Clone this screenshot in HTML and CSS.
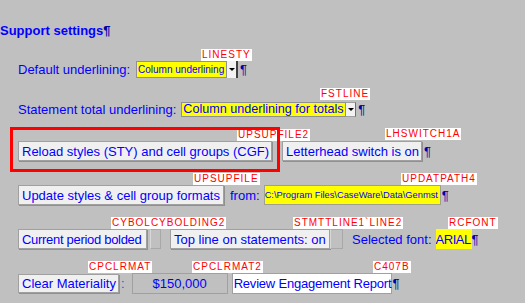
FILE: index.html
```html
<!DOCTYPE html>
<html>
<head>
<meta charset="utf-8">
<link rel="stylesheet" href="styles.css">
</head>
<body>
<div class="page">
  <h1 class="title">Support settings<span class="pil">¶</span></h1>

  <div class="row row-default">
    <span class="lbl">Default underlining:</span>
    <span class="combo combo-1">
      <span class="combo-val">Column underlining</span>
      <span class="combo-btn"><i class="arrow"></i></span>
    </span>
    <span class="pil">¶</span>
    <span class="badge b-linesty">LINESTY</span>
  </div>

  <div class="row row-total">
    <span class="lbl">Statement total underlining:</span>
    <span class="combo combo-2">
      <span class="combo-val">Column underlining for totals</span>
      <span class="combo-btn"><i class="arrow"></i></span>
    </span>
    <span class="pil">¶</span>
    <span class="badge b-fstline">FSTLINE</span>
  </div>

  <div class="row row-reload">
    <span class="badge b-upsupfile2">UPSUPFILE2</span>
    <span class="badge b-lhswitch">LHSWITCH1A</span>
    <div class="redbox">
      <span class="btn btn-reload">Reload styles (STY) and cell groups (CGF)</span>
    </div>
    <div class="group">
      <span class="btn btn-letter">Letterhead switch is on</span>
      <span class="pil">¶</span>
    </div>
  </div>

  <div class="row row-update">
    <span class="btn btn-update">Update styles &amp; cell group formats</span>
    <span class="lbl from">from:</span>
    <span class="field path">C:\Program Files\CaseWare\Data\Genmst</span>
    <span class="pil">¶</span>
    <span class="badge b-upsupfile">UPSUPFILE</span>
    <span class="badge b-updatpath">UPDATPATH4</span>
  </div>

  <div class="row row-bold">
    <span class="btn btn-current">Current period bolded</span>
    <span class="stub stub-1"></span>
    <span class="btn btn-topline">Top line on statements: on</span>
    <span class="stub stub-2"></span>
    <span class="lbl selfont">Selected font:</span>
    <span class="field arial">ARIAL</span>
    <span class="pil">¶</span>
    <span class="badge b-cybol">CYBOLCYBOLDING2</span>
    <span class="badge b-stmtt">STMTTLINE1`LINE2</span>
    <span class="badge b-rcfont">RCFONT</span>
  </div>

  <div class="row row-clear">
    <span class="btn btn-clear">Clear Materiality</span>
    <span class="lbl colon">:</span>
    <span class="amount">$150,000</span>
    <span class="review">Review Engagement Report</span>
    <span class="pil">¶</span>
    <span class="badge b-cpclrmat">CPCLRMAT</span>
    <span class="badge b-cpclrmat2">CPCLRMAT2</span>
    <span class="badge b-c407b">C407B</span>
  </div>
</div>
</body>
</html>
```
FILE: styles.css
```css
* { box-sizing: border-box; }
html, body { margin: 0; padding: 0; }
body {
  background: #c0c0c0;
  font-family: "Liberation Sans", Arial, sans-serif;
  font-size: 13px;
  color: #0000ff;
  width: 525px;
  height: 303px;
  overflow: hidden;
}
.page { padding-top: 23px; }
.title {
  margin: 0;
  font-size: 13px;
  font-weight: bold;
  line-height: 15px;
  height: 15px;
  color: #0000ff;
}
.pil { color: #0000a8; white-space: nowrap; }

.row {
  position: relative;
  display: flex;
  align-items: center;
  padding-left: 18px;
  line-height: 15px;
  white-space: nowrap;
}
.row-default { margin-top: 23px; height: 17px; }
.row-total { margin-top: 24px; height: 15px; }
.row-reload { margin-top: 10px; height: 45px; padding-left: 10px; align-items: flex-start; }
.row-update { margin-top: 13px; height: 20px; }
.row-bold { margin-top: 24px; height: 20px; }
.row-clear { margin-top: 24px; height: 21px; }

/* combo boxes */
.combo { display: flex; align-items: stretch; }
.combo-val {
  background: #ffff00;
  border: 1px solid #909090;
  overflow: hidden;
  color: #0000ff;
  padding-left: 1px;
  display: flex;
  align-items: center;
}
.combo-btn {
  background: #f2f2f2;
  border-right: 2px solid #404040;
  display: flex;
  align-items: center;
  justify-content: center;
}
.arrow {
  display: block;
  width: 0;
  height: 0;
  border-left: 3px solid transparent;
  border-right: 3px solid transparent;
  border-top: 3px solid #000;
}
.combo-1 { margin-left: 6px; height: 17px; }
.combo-1 .combo-val { width: 91px; font-size: 10px; }
.combo-1 .combo-btn { width: 11px; }
.combo-1 + .pil { margin-left: 2px; }
.combo-2 { margin-left: 5px; height: 15px; }
.combo-2 .combo-val { width: 165px; font-size: 12.6px; }
.combo-2 .combo-btn { width: 10px; border-right: 1px solid #707070; border-top: 1px solid #a0a0a0; border-bottom: 1px solid #a0a0a0; }
.combo-2 + .pil { margin-left: 2px; }

/* buttons */
.btn {
  display: flex;
  align-items: center;
  height: 20px;
  background: #f0f0f0;
  border: 1px solid #a0a0a0;
  box-shadow: 1px 1px 0 #909090;
  padding-left: 3px;
  color: #0000ff;
  overflow: hidden;
}
.redbox {
  position: relative;
  z-index: 2;
  width: 270px;
  height: 45px;
  border: 3px solid #ff0000;
  padding: 11px 0 0 5px;
}
.btn-reload { width: 254px; }
.group {
  display: flex;
  align-items: center;
  height: 20px;
  margin-top: 14px;
  margin-left: 2px;
}
.btn-letter { width: 140px; }
.btn-letter + .pil { margin-left: 2px; }

.btn-update { width: 206px; }
.from { margin-left: 6px; }
.field {
  display: flex;
  align-items: center;
  background: #ffff00;
  border: 1px solid #a0a090;
  height: 20px;
  overflow: hidden;
  color: #0000ff;
}
.path { margin-left: 4px; width: 177px; font-size: 9.3px; padding-left: 0; }
.path + .pil { margin-left: 1px; }

.btn-current { width: 129px; letter-spacing: -0.3px; }
.stub {
  display: block;
  height: 20px;
  background: #c0c0c0;
  border: 1px solid #a8a8a8;
  border-left-color: #d8d8d8;
}
.stub-1 { width: 11px; margin-left: 3px; }
.btn-topline { width: 160px; margin-left: 9px; }
.stub-2 { width: 13px; }
.selfont { margin-left: 9px; }
.arial { margin-left: 4px; width: 36px; border: none; letter-spacing: -0.45px; }

.btn-clear { width: 101px; height: 19px; }
.colon { margin-left: 2px; color: #4040ff; }
.amount {
  margin-left: 7px;
  width: 96px;
  height: 21px;
  border: 1px solid #a0a0a0;
  display: flex;
  align-items: center;
  justify-content: center;
  color: #0000ff;
}
.review {
  margin-left: 4px;
  height: 21px;
  background: #ffffff;
  border: 1px solid #a0a0a0;
  padding-left: 1px;
  letter-spacing: -0.2px;
  display: flex;
  align-items: center;
  color: #0000ff;
}

/* field-name badges */
.badge {
  position: absolute;
  z-index: 1;
  height: 12px;
  line-height: 12px;
  padding: 0 1px 0 1px;
  background: #ffffff;
  color: #ff0000;
  font-size: 10px;
  letter-spacing: 1px;
  font-weight: normal;
}
.b-linesty { left: 201px; top: -12px; }
.b-fstline { left: 320px; top: -14px; }
.b-upsupfile2 { left: 237px; top: 2px; }
.b-lhswitch { left: 385px; top: 1px; }
.b-upsupfile { left: 193px; top: -12px; }
.b-updatpath { left: 401px; top: -12px; }
.b-cybol { left: 111px; top: -12px; }
.b-stmtt { left: 293px; top: -12px; }
.b-rcfont { left: 448px; top: -12px; }
.b-cpclrmat { left: 88px; top: -12px; }
.b-cpclrmat2 { left: 192px; top: -12px; }
.b-c407b { left: 373px; top: -12px; }
```
